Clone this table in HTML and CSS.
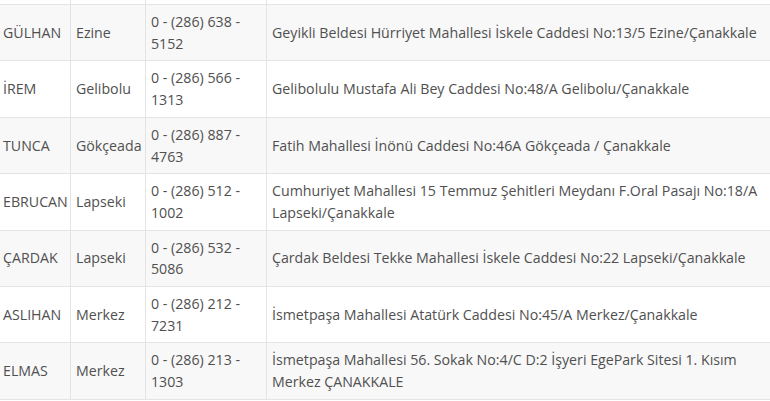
FILE: index.html
```html
<!DOCTYPE html>
<html lang="tr">
<head>
<meta charset="utf-8">
<title>Eczaneler</title>
<link rel="stylesheet" href="styles.css">
</head>
<body>
<div class="wrap">
<table class="pharm">
<colgroup><col class="c-name"><col class="c-town"><col class="c-phone"><col class="c-addr"></colgroup>
<tbody>
<tr class="ghost"><td>&nbsp;</td><td></td><td></td><td></td></tr>
<tr><td>GÜLHAN</td><td>Ezine</td><td>0 - (286) 638 - 5152</td><td>Geyikli Beldesi Hürriyet Mahallesi İskele Caddesi No:13/5 Ezine/Çanakkale</td></tr>
<tr><td>İREM</td><td>Gelibolu</td><td>0 - (286) 566 - 1313</td><td>Gelibolulu Mustafa Ali Bey Caddesi No:48/A Gelibolu/Çanakkale</td></tr>
<tr><td>TUNCA</td><td>Gökçeada</td><td>0 - (286) 887 - 4763</td><td>Fatih Mahallesi İnönü Caddesi No:46A Gökçeada / Çanakkale</td></tr>
<tr><td>EBRUCAN</td><td>Lapseki</td><td>0 - (286) 512 - 1002</td><td>Cumhuriyet Mahallesi 15 Temmuz Şehitleri Meydanı F.Oral Pasajı No:18/A Lapseki/Çanakkale</td></tr>
<tr><td>ÇARDAK</td><td>Lapseki</td><td>0 - (286) 532 - 5086</td><td>Çardak Beldesi Tekke Mahallesi İskele Caddesi No:22 Lapseki/Çanakkale</td></tr>
<tr><td>ASLIHAN</td><td>Merkez</td><td>0 - (286) 212 - 7231</td><td>İsmetpaşa Mahallesi Atatürk Caddesi No:45/A Merkez/Çanakkale</td></tr>
<tr><td>ELMAS</td><td>Merkez</td><td>0 - (286) 213 - 1303</td><td>İsmetpaşa Mahallesi 56. Sokak No:4/C D:2 İşyeri EgePark Sitesi 1. Kısım Merkez ÇANAKKALE</td></tr>
</tbody>
</table>
</div>
</body>
</html>
```

FILE: styles.css
```css
html, body {
  margin: 0;
  padding: 0;
  overflow: hidden;
  background: #fff;
}
.wrap {
  height: 401px;
  overflow: hidden;
}
.pharm {
  border-collapse: collapse;
  table-layout: fixed;
  width: 777px;
  margin: -52px 0 0 -3px;
  font-family: "Open Sans", sans-serif;
  font-size: 14.2px;
  line-height: 21.7px;
  color: #505050;
}
.c-name { width: 73px; }
.c-town { width: 75px; }
.c-phone { width: 121px; }
.c-addr { width: 508px; }
.pharm td {
  border: 1px solid #e4e4e4;
  padding: 6px 5px;
  vertical-align: middle;
  text-align: left;
}
.pharm tr:nth-child(even) td {
  background: #f8f8f8;
}
.pharm tr.ghost td {
  height: 43px;
}
```
